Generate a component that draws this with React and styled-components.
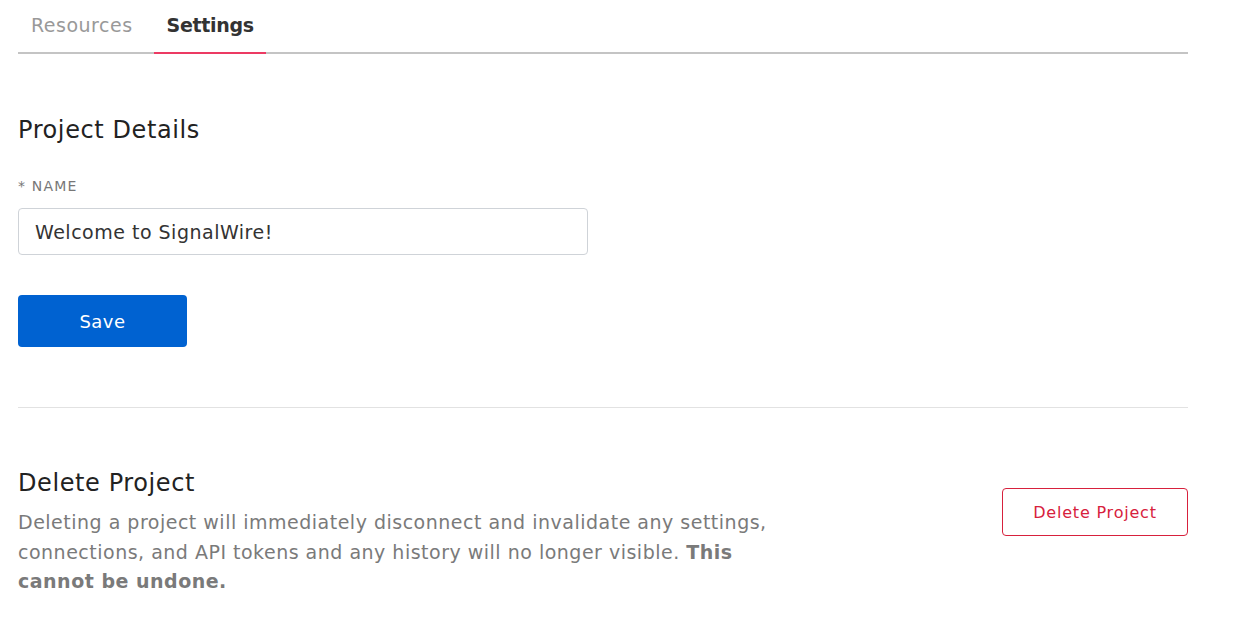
import React from "react";
import styled, { createGlobalStyle } from "styled-components";

const Global = createGlobalStyle`
  html, body { margin: 0; padding: 0; background: #fff; }
  body { font-family: "DejaVu Sans", "Liberation Sans", sans-serif; color: #222; }
  * { box-sizing: border-box; }
`;

const Page = styled.div`
  width: 1170px;
  margin-left: 18px;
`;

const Tabs = styled.div`
  display: flex;
  height: 54px;
  border-bottom: 2px solid #c4c4c4;
`;

const Tab = styled.div`
  display: flex;
  align-items: center;
  padding: 0 12px 2px 13px;
  margin-bottom: -2px;
  height: 54px;
  font-size: 19px;
  letter-spacing: ${(p) => (p.$active ? "-0.3px" : "0.5px")};
  font-weight: ${(p) => (p.$active ? 700 : 400)};
  color: ${(p) => (p.$active ? "#333" : "#999")};
  border-bottom: 2px solid ${(p) => (p.$active ? "#ec3a63" : "transparent")};
  & + & { margin-left: 9px; }
`;

const Section = styled.section`
  padding-top: ${(p) => p.$top || 0}px;
`;

const Heading = styled.h2`
  margin: 0;
  font-size: 24px;
  letter-spacing: 0.6px;
  font-weight: 400;
  line-height: 30px;
  color: #222;
`;

const Label = styled.div`
  margin-top: 31px;
  font-size: 14px;
  letter-spacing: 1.2px;
  line-height: 20px;
  color: #777;
`;

const Input = styled.input`
  display: block;
  margin-top: 12px;
  width: 570px;
  height: 47px;
  padding: 0 16px;
  border: 1px solid #cfd3d8;
  border-radius: 4px;
  font-family: inherit;
  font-size: 19px;
  letter-spacing: 0.5px;
  color: #333;
  outline: none;
`;

const PrimaryButton = styled.button`
  display: block;
  margin-top: 40px;
  width: 169px;
  height: 52px;
  border: none;
  border-radius: 4px;
  background: #0062d1;
  color: #fff;
  font-family: inherit;
  font-size: 18px;
  letter-spacing: 0.5px;
  cursor: pointer;
`;

const Divider = styled.hr`
  margin: 60px 0 0;
  border: none;
  border-top: 1px solid #e2e2e2;
`;

const DeleteRow = styled.div`
  display: flex;
  justify-content: space-between;
  align-items: flex-start;
  padding-top: 60px;
`;

const DeleteText = styled.div`
  width: 765px;
`;

const Paragraph = styled.p`
  margin: 10px 0 0;
  font-size: 19px;
  letter-spacing: 0.5px;
  line-height: 29.5px;
  color: #7a7a7a;
  b { font-weight: 700; }
`;

const OutlineButton = styled.button`
  margin-top: 20px;
  width: 186px;
  height: 48px;
  background: #fff;
  border: 1px solid #d7213d;
  border-radius: 4px;
  color: #d7213d;
  font-family: inherit;
  font-size: 16px;
  letter-spacing: 0.8px;
  cursor: pointer;
`;

export default function App() {
  return (
    <Page>
      <Global />
      <Tabs>
        <Tab>Resources</Tab>
        <Tab $active>Settings</Tab>
      </Tabs>
      <Section $top={61}>
        <Heading>Project Details</Heading>
        <Label>* NAME</Label>
        <Input defaultValue="Welcome to SignalWire!" />
        <PrimaryButton>Save</PrimaryButton>
      </Section>
      <Divider />
      <DeleteRow>
        <DeleteText>
          <Heading>Delete Project</Heading>
          <Paragraph>
            Deleting a project will immediately disconnect and invalidate any settings,
            connections, and API tokens and any history will no longer visible.{" "}
            <b>This cannot be undone.</b>
          </Paragraph>
        </DeleteText>
        <OutlineButton>Delete Project</OutlineButton>
      </DeleteRow>
    </Page>
  );
}
